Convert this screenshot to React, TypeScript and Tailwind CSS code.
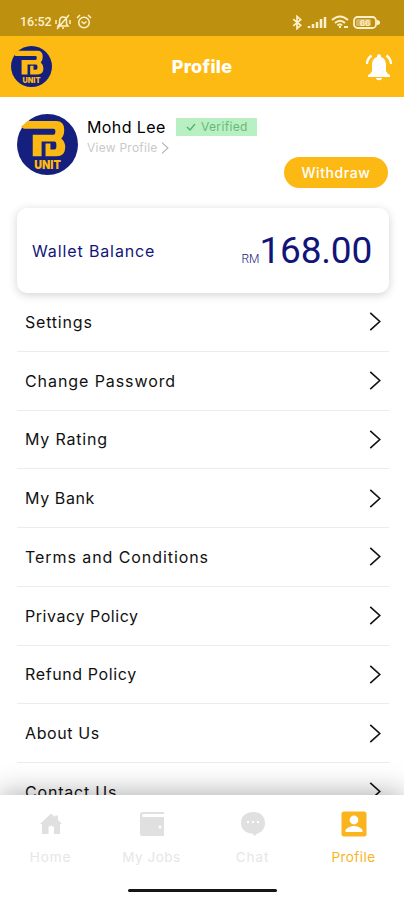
import * as React from 'react';

const menuItems = [
    { label: 'Settings', className: 'tracking-[0.8px]' },
    { label: 'Change Password', className: 'tracking-[0.92px]' },
    { label: 'My Rating', className: 'tracking-[0.8px]' },
    { label: 'My Bank', className: 'tracking-[0.6px]' },
    { label: 'Terms and Conditions', className: 'tracking-[0.93px]' },
    { label: 'Privacy Policy', className: 'tracking-[0.55px]' },
    { label: 'Refund Policy', className: 'tracking-[0.62px]' },
    { label: 'About Us', className: 'tracking-[0.6px]' },
    { label: 'Contact Us', className: 'tracking-[0.8px]' },
];

function Logo({ className }: { className: string }) {
    return (
        <svg viewBox="0 0 62 62" className={className}>
            <circle cx="31" cy="31" r="31" fill="#151f7e" />
            <path d="M11 7H40Q48 7 48 16Q48 22 45 25Q49 28 49 34Q49 43 40 43H29V30H34V36H38Q40 36 40 33V31Q40 28 38 28H25V43H16V21H37Q39 21 39 18V17Q39 15 37 15H7L4 13Z" fill="#fdb913" />
            <text x="31" y="56" textAnchor="middle" textLength="27" lengthAdjust="spacingAndGlyphs" fontSize="12" fontWeight="900" fill="#fdb913">UNIT</text>
        </svg>
    );
}

function Chevron({ className }: { className: string }) {
    return (
        <svg viewBox="0 0 12 20" fill="none" stroke="currentColor" className={className}>
            <path d="M1 1L11 10L1 19" strokeWidth="1.7" />
        </svg>
    );
}

function StatusBar() {
    return (
        <div className="flex h-9 shrink-0 items-center bg-[#bd900f] pt-2 pl-5 text-[#fff0cc]">
            <span className="w-[35px] font-[Roboto] text-[12.5px] font-medium">16:52</span>
            <svg viewBox="0 0 16 16" className="h-4 w-4" fill="none" stroke="currentColor" strokeWidth="1.5">
                <path d="M3 12H13L11.5 10V6C11.5 4 10 3 8 3C5 3 4.500 5 4.500 8V10ZM7 14H9M14 1L2 15M1 6V10M15 6V10" />
            </svg>
            <svg viewBox="0 0 16 16" className="ml-[5px] h-4 w-4" fill="none" stroke="currentColor" strokeWidth="1.5">
                <circle cx="8" cy="8.5" r="5.3" />
                <path d="M1 4L4 1M12 1L15 4M5.5 7.5L8 9.5L10.5 7.5" />
            </svg>
            <div className="ml-auto flex items-center pr-[24px]">
                <svg viewBox="0 0 10 16" className="mr-[5px] h-[15px] w-[10px]" fill="none" stroke="currentColor" strokeWidth="1.8">
                    <path d="M1 4.500L9 11L5 14.500V1.500L9 5L1 11.500" />
                </svg>
                <svg viewBox="0 0 20 13" className="mr-1 h-[13px] w-5" stroke="currentColor" strokeWidth="2.5">
                    <path d="M2 12V10M6 12V8M10 12V6M14 12V3M18 12V1" />
                </svg>
                <svg viewBox="0 0 18 14" className="mr-1 h-[14px] w-[18px]" fill="none" stroke="currentColor" strokeWidth="2">
                    <path d="M1 5Q9 -2 17 5M4 8Q9 3.500 14 8M6.500 10.500Q9 8 11 10.500M9 11V13M13 12H17" />
                </svg>
                <svg viewBox="0 0 27 13" className="h-[13px] w-[27px]">
                    <rect x="1" y="1" width="22" height="11" rx="3.5" fill="none" stroke="currentColor" strokeWidth="1.8" />
                    <rect x="3" y="3" width="15" height="7" rx="1.5" fill="currentColor" opacity=".4" />
                    <path d="M24 4Q27 4 27 6.500Q27 9 24 9Z" fill="currentColor" />
                    <text x="12" y="9.5" textAnchor="middle" fontSize="8" fontWeight="700" fill="currentColor">66</text>
                </svg>
            </div>
        </div>
    );
}

function Header() {
    return (
        <header className="grid h-[61px] shrink-0 grid-cols-[1fr_auto_1fr] items-center bg-[#fdba12] px-[11px]">
            <Logo className="h-[41px] w-[41px]" />
            <h1 className="text-[18px] font-extrabold tracking-[0.3px] text-white">Profile</h1>
            <svg viewBox="0 0 28 28" className="h-7 w-7 justify-self-end" fill="white">
                <path d="M5 21L7 18V12C7 7.500 9 5 12 4V3C12 0.500 16 0.500 16 3V4C19 5 21 7.500 21 12V18L23 21L25 22V24H3V22ZM11 25H17C17 28 11 28 11 25Z" />
                <path d="M2 11Q2 6 6.500 2.500M26 11Q26 6 21.500 2.500" fill="none" stroke="white" strokeWidth="2.3" />
            </svg>
        </header>
    );
}

function UserCard() {
    return (
        <section className="flex h-[111px] shrink-0 pt-[17px] pl-[17px]">
            <Logo className="h-[61px] w-[61px]" />
            <div className="ml-[9px] flex-1">
                <div className="flex items-center pt-px">
                    <span className="w-[89px] text-[16px] leading-6 tracking-[0.4px] whitespace-nowrap text-black">Mohd Lee</span>
                    <div className="flex h-[18px] w-[81px] items-center bg-[#b9f0c3] pl-[10px] text-[12px] text-[#65ba79]">
                        <svg viewBox="0 0 10 8" className="mr-[5px] h-2 w-[10px]" fill="none" stroke="#46b760" strokeWidth="1.3">
                            <path d="M1 4L4 7L9 1" />
                        </svg>
                        <span className="tracking-[0.35px]">Verified</span>
                    </div>
                </div>
                <div className="flex h-[18px] items-center text-[12px] text-[#c9c9c9]">
                    <span className="w-[74px] tracking-[0.25px] whitespace-nowrap">View Profile</span>
                    <Chevron className="h-[12px] w-[8px] text-[#b0b0b0]" />
                </div>
                <button className="mr-4 ml-auto block h-[31px] w-[104px] rounded-full bg-[#fdb913] text-[14px] font-medium tracking-[0.6px] text-white">Withdraw</button>
            </div>
        </section>
    );
}

function WalletCard() {
    return (
        <section className="mr-[15px] ml-[17px] flex h-[85px] shrink-0 items-center justify-between rounded-[10px] bg-white pr-[17px] pl-[15px] text-[#111579] shadow-[0_2px_10px_rgba(0,0,0,0.18)]">
            <span className="text-[16px] tracking-[0.88px]">Wallet Balance</span>
            <div className="flex items-baseline font-[Roboto]">
                <span className="text-[12px] font-light">RM</span>
                <span className="text-[37px] leading-none tracking-[-0.2px]">168.00</span>
            </div>
        </section>
    );
}

function Menu() {
    return (
        <main className="min-h-0 flex-1 overflow-hidden pr-[15px] pl-[17px]">
            {menuItems.map((item) => (
                <div key={item.label} className="flex h-[58.75px] items-center justify-between border-b border-[#ececec] pr-2 pl-2 text-[#111]">
                    <span className={`text-[16px] ${item.className}`}>{item.label}</span>
                    <Chevron className="h-[19px] w-3" />
                </div>
            ))}
        </main>
    );
}

function BottomNav() {
    return (
        <nav className="relative h-[105px] shrink-0 bg-white shadow-[0_0_28px_rgba(0,0,0,0.36)]">
            <div className="grid h-[75px] grid-cols-4 text-[13.5px] text-[#e6e6e6]">
                <div className="flex flex-col items-center pt-4">
                    <svg viewBox="0 0 26 26" className="h-[26px] w-[26px]" fill="#e0e0e0">
                        <path d="M13 2.500L17 6V4.500H20V9L24 13H22V23H16V16Q13 13.500 10.500 16V23H4V13H2Z" />
                    </svg>
                    <span className="mt-2.5 tracking-[0.9px]">Home</span>
                </div>
                <div className="flex flex-col items-center pt-4">
                    <svg viewBox="0 0 26 26" className="h-[26px] w-[26px]" fill="#e0e0e0">
                        <path d="M4 1H25V3H4Q2 4.500 4 6H25V25H3Q1 25 1 22V4Q1 1 4 1Z" />
                        <circle cx="21" cy="16" r="1.5" fill="white" />
                    </svg>
                    <span className="mt-2.5 tracking-[0.5px]">My Jobs</span>
                </div>
                <div className="flex flex-col items-center pt-4">
                    <svg viewBox="0 0 26 26" className="h-[26px] w-[26px]" fill="#e0e0e0">
                        <path d="M13 1C20 1 25 5 25 12C25 18 21 22 17 22.500L15 25L12 22.500C5 22 1 18 1 12C1 5 6 1 13 1Z" />
                        <path d="M7 11H9M12 11H14M17 11H19" stroke="white" strokeWidth="2" />
                    </svg>
                    <span className="mt-2.5 tracking-[0.9px]">Chat</span>
                </div>
                <div className="flex flex-col items-center pt-4 text-[#f9b41e]">
                    <svg viewBox="0 0 26 26" className="h-[26px] w-[26px]">
                        <rect x="0.5" y="0.5" width="25" height="25" rx="2.5" fill="currentColor" />
                        <circle cx="13" cy="9" r="4.4" fill="white" />
                        <path d="M4.500 21V19.500C5 17 10 15 13 15C16 15 21 17 21.500 19.500V21Z" fill="white" />
                    </svg>
                    <span className="mt-2.5 tracking-[0.45px]">Profile</span>
                </div>
            </div>
            <div className="mx-auto mt-[19px] h-[3px] w-[149px] rounded-full bg-[#161616]" />
        </nav>
    );
}

export default function App() {
    return (
        <div className="flex h-[900px] w-[404px] flex-col overflow-hidden bg-white font-[Inter,sans-serif]">
            <StatusBar />
            <Header />
            <UserCard />
            <WalletCard />
            <Menu />
            <BottomNav />
        </div>
    );
}
